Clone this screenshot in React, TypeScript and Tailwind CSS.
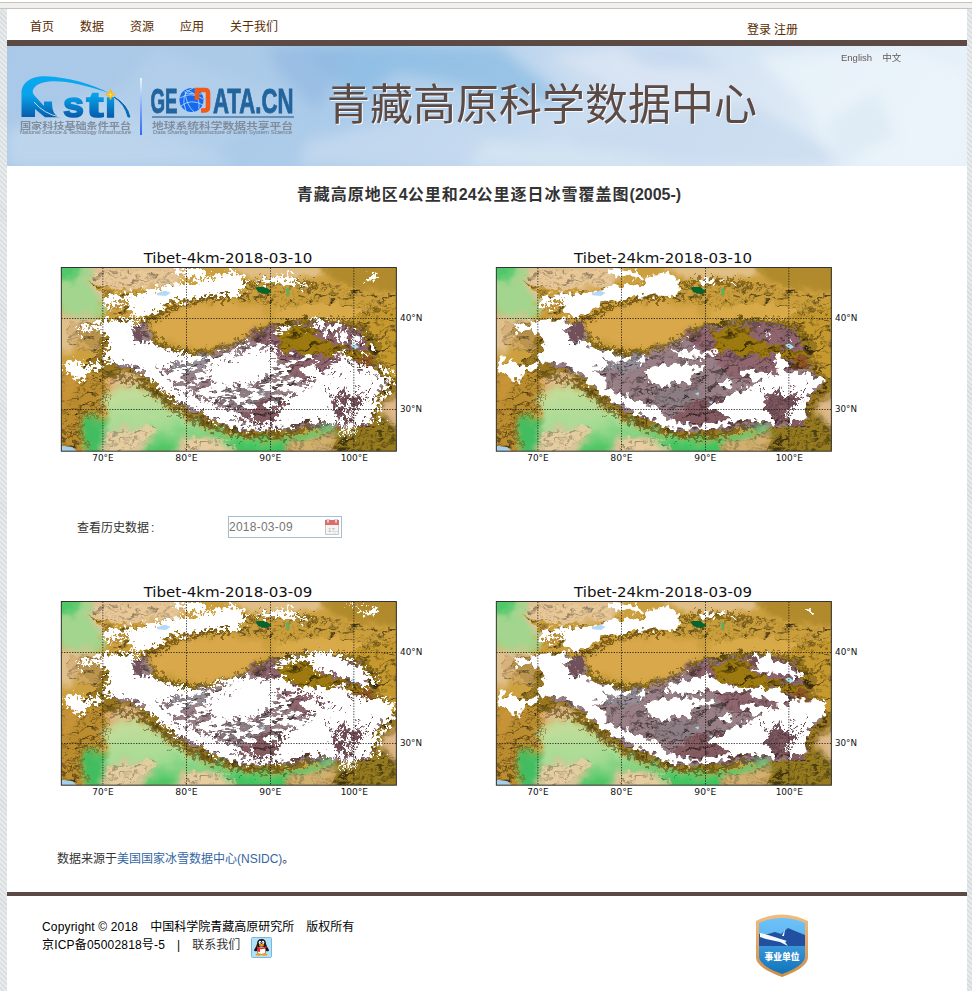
import React from "react";

const CJK = "font-['Liberation_Sans','Noto_Sans_CJK_SC',sans-serif]";

function SharedDefs() {
  return (
    <svg width="0" height="0" className="absolute" aria-hidden="true">
      <defs>
        <filter id="relief" x="0" y="0" width="1" height="1" colorInterpolationFilters="sRGB">
          <feTurbulence type="fractalNoise" baseFrequency="0.032 0.048" numOctaves="3" seed="7" result="n" />
          <feDiffuseLighting in="n" surfaceScale="9" diffuseConstant="1.28" lightingColor="#fff" result="l">
            <feDistantLight azimuth="235" elevation="52" />
          </feDiffuseLighting>
          <feComposite in="SourceGraphic" in2="l" operator="arithmetic" k1="0.95" k2="0.12" k3="0" k4="0" result="m" />
          <feDisplacementMap in="m" in2="n" scale="46" xChannelSelector="R" yChannelSelector="G" />
        </filter>
        <filter id="lowland" x="-0.1" y="-0.1" width="1.2" height="1.2" colorInterpolationFilters="sRGB">
          <feGaussianBlur stdDeviation="9" result="b" />
          <feTurbulence type="fractalNoise" baseFrequency="0.02" numOctaves="3" seed="3" result="n" />
          <feDisplacementMap in="b" in2="n" scale="50" xChannelSelector="R" yChannelSelector="G" />
        </filter>
        <filter id="edge24" x="0" y="0" width="1170" height="690" filterUnits="userSpaceOnUse" colorInterpolationFilters="sRGB">
          <feTurbulence type="fractalNoise" baseFrequency="0.05" numOctaves="2" seed="11" result="n" />
          <feDisplacementMap in="SourceGraphic" in2="n" scale="46" xChannelSelector="R" yChannelSelector="G" />
        </filter>
        <filter id="edge4" x="0" y="0" width="1170" height="690" filterUnits="userSpaceOnUse" colorInterpolationFilters="sRGB">
          <feTurbulence type="fractalNoise" baseFrequency="0.08" numOctaves="3" seed="5" result="n" />
          <feDisplacementMap in="SourceGraphic" in2="n" scale="60" xChannelSelector="R" yChannelSelector="G" />
        </filter>
        <filter id="streaks" x="0" y="0" width="1170" height="690" filterUnits="userSpaceOnUse" colorInterpolationFilters="sRGB">
          <feTurbulence type="fractalNoise" baseFrequency="0.025 0.055" numOctaves="5" seed="21" result="n" />
          <feColorMatrix in="n" type="matrix" values="0 0 0 0 1  0 0 0 0 1  0 0 0 0 1  22 0 0 0 -11" result="t" />
          <feDisplacementMap in="SourceGraphic" in2="n" scale="90" xChannelSelector="G" yChannelSelector="B" result="s" />
          <feComposite in="t" in2="s" operator="in" />
        </filter>
        <filter id="dense" x="0" y="0" width="1170" height="690" filterUnits="userSpaceOnUse" colorInterpolationFilters="sRGB">
          <feTurbulence type="fractalNoise" baseFrequency="0.055 0.045" numOctaves="4" seed="9" result="n" />
          <feColorMatrix in="n" type="matrix" values="0 0 0 0 1  0 0 0 0 1  0 0 0 0 1  22 0 0 0 -10" result="t" />
          <feDisplacementMap in="SourceGraphic" in2="n" scale="90" xChannelSelector="G" yChannelSelector="B" result="s" />
          <feComposite in="t" in2="s" operator="in" />
        </filter>
        <clipPath id="frame">
          <rect x="34" y="83" width="1006" height="551" />
        </clipPath>
        <linearGradient id="ganges" x1="0" y1="0" x2="0.25" y2="1">
          <stop offset="0" stopColor="#c9dc9c" />
          <stop offset="0.55" stopColor="#a9dc96" />
          <stop offset="1" stopColor="#3cc35d" />
        </linearGradient>
        <g id="terrain">
          <rect x="0" y="50" width="1100" height="640" fill="#cda03f" />
          <g filter="url(#lowland)">
            <path d="M0 50H115L160 100V225L110 240L0 200Z" fill="#a3d58e" />
            <path d="M0 50H105L75 125L0 120Z" fill="#4fc869" />
            <path d="M110 60H420L385 140L250 160L165 185L135 160Z" fill="#e2c294" />
            <path d="M0 215L160 235L90 265L70 330L0 355Z" fill="#dfbf8c" />
            <path d="M500 60H830L810 120L700 115L600 120Z" fill="#e0bf87" />
            <path d="M800 60H1100V150L960 155L850 125Z" fill="#b08a2c" />
            <path d="M690 195L850 185L1080 180V245L860 255L680 240Z" fill="#d8aa49" />
          </g>
          <g filter="url(#relief)">
            <path d="M110 125L160 140L250 150L330 150L470 125L600 122L760 130L900 140L1060 170V245L960 215L850 190L700 205L610 200L540 175L440 190L330 235L280 250L160 220L250 200L160 165Z" fill="#bd9436" />
            <path d="M1060 180V420L1000 400L980 300L900 240L970 205Z" fill="#b98f2b" />
            <path d="M20 380L160 370L240 400L180 430L160 500L110 530L90 650H20Z" fill="#b0842b" />
            <path d="M75 265L160 235L300 245L330 310L430 335L560 305L650 255L800 232L930 255L985 310L1000 400L1050 420V650H830L850 590L780 555L690 595L590 592L480 565L390 525L290 445L200 405L100 390L140 340Z" fill="#8f6f1e" />
            <path d="M1060 470L1060 650H840L870 560L980 540L1000 500Z" fill="#8b721d" />
          </g>
          <g filter="url(#relief)">
            <path d="M225 250L290 240L315 315L430 352L540 315L610 275L700 255L850 240L920 265L960 350L990 410L1020 425L965 480L960 540L880 565L700 570L580 575L490 540L400 500L350 450L290 405L180 370L200 290Z" fill="#8f777d" />
            <path d="M590 280L700 260L850 242L930 270L970 350L900 420L740 410L640 330Z" fill="#865f67" />
            <path d="M640 480L830 470L970 470L950 555L800 550L640 565L560 540Z" fill="#7b555a" />
            <path d="M350 340L480 345L470 390L400 400L350 375Z" fill="#8d858d" />
            <path d="M500 450L640 440L620 500L520 495Z" fill="#83747a" />
          </g>
          <g filter="url(#relief)">
            <path d="M675 280L750 252L800 268L810 300L900 325L960 340L970 385L930 385L890 345L760 348L700 325Z" fill="#93720f" />
            <path d="M900 348L975 350L970 385L935 385Z" fill="#865023" />
          </g>
          <g filter="url(#lowland)">
            <path d="M290 255L410 200L540 182L650 215L655 238L600 280L545 312L440 330L340 295Z" fill="#d9a84b" />
            <path d="M168 450L270 435L330 480L400 530L480 565L590 592L700 595L850 555L850 590L700 650H150Z" fill="url(#ganges)" />
            <path d="M95 525L165 540L170 650H125L95 590Z" fill="#41bd60" />
            <path d="M175 415L250 400L290 425L175 445Z" fill="#e0bb8b" />
            <path d="M160 575L270 560L330 575L290 610L250 660H165Z" fill="#d9c698" />
            <path d="M380 595L480 590L560 640L540 660H370Z" fill="#dcc596" />
            <path d="M710 620L850 575L855 650H700Z" fill="#d1b47c" />
            <path d="M990 500L1060 440V575L1010 530Z" fill="#e0ba8b" />
            <path d="M40 390L90 395L60 470L34 520Z" fill="#c9953a" />
          </g>
          <g filter="url(#relief)" opacity=".6">
            <path d="M160 580L310 555L320 570L230 640H180Z" fill="#dec59a" />
            <path d="M400 600L500 590L560 620L530 640H400Z" fill="#dec59a" />
            <path d="M700 610L850 570L860 640H710Z" fill="#c6a15e" />
            <path d="M180 420L240 405L280 430L180 440Z" fill="#dab183" />
            <path d="M60 240L160 240L150 340L50 320Z" fill="#c5a068" />
            <path d="M120 90L400 90L380 130L160 150Z" fill="#dfbf91" />
          </g>
          <path d="M278 252Q340 210 410 188T545 176" fill="none" stroke="#64480c" strokeWidth="13" filter="url(#edge4)" opacity=".7" />
          <path d="M288 262L340 315L435 342L545 318L620 272L700 252L850 240L930 255L980 310" fill="none" stroke="#6b560f" strokeWidth="11" filter="url(#edge4)" opacity=".65" />
          <path d="M160 400L270 425L380 515L480 562L590 588L700 588L800 552" fill="none" stroke="#5d4a10" strokeWidth="16" filter="url(#edge4)" opacity=".6" />
          <path d="M170 440L165 510L120 530L90 515L90 580L110 620" fill="none" stroke="#7c5a16" strokeWidth="9" filter="url(#edge4)" opacity=".55" />
          <path d="M590 135L650 120L780 130L800 150" fill="none" stroke="#6b500d" strokeWidth="16" filter="url(#edge4)" opacity=".65" />
          <path d="M615 142L645 140L665 153L650 163L625 157Z" fill="#08632d" />
          <path d="M708 148L716 142L718 168L710 164Z" fill="#55b36a" />
          <path d="M34 617L68 622L80 634H34Z" fill="#a4cfee" />
          <path d="M900 315L912 310L927 321L915 328Z" fill="#a9e4f4" />
          <path d="M630 460L642 457L640 467ZM670 485L684 484L680 492Z" fill="#9be3ea" />
        </g>
        <g id="snowCore">
          <path d="M165 168L300 158L380 138L475 132L490 108L535 98L580 115L585 138L560 168L480 166L400 185L370 178L330 212L270 236L245 227L240 193L180 210L160 202Z" />
          <path d="M370 86L430 90L480 108L465 118L380 103Z" />
          <path d="M85 262L130 248L165 240L248 238L262 250L242 270L255 305L290 308L330 325L400 340L440 364L390 368L350 352L375 386L320 382L360 412L370 450L400 460L460 485L515 502L540 530L620 560L700 545L755 542L720 565L620 569L540 560L480 532L440 508L380 482L330 447L290 405L250 375L172 370L162 340L178 310L168 280L130 268L92 278Z" />
          <path d="M40 368L65 358L92 362L105 382L155 365L162 378L125 394L108 402L92 432L65 404L40 392Z" />
          <path d="M485 388L540 375L600 370L655 378L660 395L620 402L608 425L570 432L525 442L495 425L480 408Z" />
          <path d="M565 335L640 330L700 340L655 355L580 350Z" />
          <path d="M690 495L750 460L790 442L835 430L782 412L768 395L830 395L880 404L868 348L892 340L912 400L960 398L1025 418L985 442L965 485L925 462L890 470L850 462L835 490L875 555L810 540L750 545L715 530Z" />
          <path d="M930 480L965 480L965 535L910 552L900 520Z" />
        </g>
      </defs>
    </svg>
  );
}

type PlotProps = { km: 4 | 24; day: string };

function SnowMap({ km, day }: PlotProps) {
  const fine = km === 4;
  const late = day === "10";
  const titleX = fine ? 281 : 267;
  return (
    <svg viewBox="0 0 1170 690" className="block h-[230px] w-[390px] shrink-0 font-['DejaVu_Sans',sans-serif]">
      <text x={titleX} y="69" fontSize="41" textLength={fine ? 506 : 534} lengthAdjust="spacingAndGlyphs" fill="#111">
        {`Tibet-${km}km-2018-03-${day}`}
      </text>
      <g clipPath="url(#frame)">
        <use href="#terrain" />
        <g fill="#fff">
          <use href="#snowCore" filter={fine ? "url(#edge4)" : "url(#edge24)"} />
          {!fine && (
            <g filter="url(#edge24)">
              <path d="M640 124L688 118L690 132L645 133ZM705 112L716 120L708 124ZM735 124L750 122L752 136ZM870 345L890 340L895 355Z" />
              <path d="M455 365L475 350L485 352L470 372ZM600 300L615 298L612 306ZM820 248L832 250L825 256ZM845 283L860 285L852 292ZM905 300L917 302L912 310ZM700 430L740 420L760 430L730 445ZM660 500L690 485L700 500L670 515Z" />
            </g>
          )}
          {!fine && !late && (
            <g filter="url(#edge24)">
              <path d="M540 345L620 310L670 300L700 325L760 342L890 348L905 400L860 380L780 355L720 352L650 352L560 360ZM620 370L690 378L680 395L620 390Z" />
              <path d="M790 248L850 242L870 265L905 270L960 308L910 310L865 297L795 290L830 268Z" />
              <path d="M915 380L1020 378L1025 425L940 445L905 420ZM965 112L983 100L984 122ZM690 120L715 102L725 120Z" />
              <path d="M940 440L990 430L955 510L915 540L900 490ZM800 465L870 460L840 500Z" />
            </g>
          )}
          {fine && (
            <>
              <g filter="url(#edge4)">
                <path d="M270 150L370 132L490 120L540 92L595 120L570 155L420 165L300 165ZM370 85L450 84L480 108L390 103Z" />
                <path d="M610 122L700 110L715 92L728 118L785 145L730 132L660 133Z" />
                <path d="M490 372L640 340L670 350L655 400L590 420L505 425L470 405Z" />
                <path d="M700 490L790 430L880 430L820 500L720 545L670 555Z" />
                <path d="M940 120L980 98L982 122Z" />
              </g>
              <g filter="url(#streaks)">
                <path d="M300 325L430 355L540 325L600 305L670 315L700 340L760 355L890 355L980 410L820 430L690 500L520 505L360 430Z" />
                <path d="M620 285L680 265L760 255L700 272L640 292Z" />
              </g>
              <g filter="url(#dense)">
                <path d="M470 370L640 325L680 370L660 410L510 432ZM690 500L800 420L890 350L1035 410L970 550L880 560L810 540L650 560ZM360 430L530 500L670 560L480 530Z" />
                <path d="M790 238L850 245L970 310L960 330L850 295L790 280Z" />
              </g>
              <g fill="none" stroke="#fff" strokeWidth="5" filter="url(#edge4)">
                <path d="M878 540V600M890 545V595M902 540V590M914 545V578M310 330L420 350" />
              </g>
            </>
          )}
          {fine && !late && (
            <g filter="url(#edge4)">
              <path d="M440 345L560 310L660 322L690 310L740 340L890 340L910 400L820 385L760 355L660 352L640 395L500 400L470 380L560 350L520 335Z" />
              <path d="M680 258L790 240L850 240L920 275L985 318L940 330L860 300L800 292L785 262Z" />
              <path d="M880 85L950 110L985 100L985 122L950 120ZM915 370L1035 385L1020 440L930 440Z" />
              <path d="M690 490L760 450L900 420L880 480L780 500L690 525Z" />
            </g>
          )}
        </g>
        <g filter="url(#edge4)" fill="#72505a">
          <path d="M250 268L275 255L282 295L258 302Z" />
          {!fine && <path d="M262 240L295 252L297 303L252 300Z" />}
          <path d="M865 455L900 465L895 480L860 475ZM850 482L880 495L875 540L858 515ZM915 465L930 480L912 520L905 490ZM845 395L860 405L850 410Z" />
        </g>
        <g filter="url(#edge4)" fill="none" stroke="#65434a" strokeWidth="4">
          <path d="M820 430L850 475L875 535M875 440L905 540M930 430L915 540M960 430L940 500M740 420L790 430" />
        </g>
        <path d="M320 160L345 152L362 158L348 168L322 166Z" fill="#b4d9f8" />
        <path d="M172 200L205 184L238 178L230 190L165 214Z" fill="#ba8e39" filter="url(#edge4)" />
      </g>
      <g stroke="#151515" strokeWidth="3" strokeDasharray="4 4" opacity=".78">
        <path d="M158.500 83V634M409.500 83V634M661.500 83V634M911.500 83V634M34 235.500H1040M34 508.500H1040" />
      </g>
      <rect x="34" y="82.500" width="1005" height="551" fill="none" stroke="#333" strokeWidth="3" />
      <g fontSize="25" fill="#111">
        <text x="127" y="662" textLength="64" lengthAdjust="spacingAndGlyphs">70°E</text>
        <text x="376" y="662" textLength="67" lengthAdjust="spacingAndGlyphs">80°E</text>
        <text x="628" y="662" textLength="66" lengthAdjust="spacingAndGlyphs">90°E</text>
        <text x="872" y="662" textLength="82" lengthAdjust="spacingAndGlyphs">100°E</text>
        <text x="1050" y="243" textLength="67" lengthAdjust="spacingAndGlyphs">40°N</text>
        <text x="1050" y="515" textLength="66" lengthAdjust="spacingAndGlyphs">30°N</text>
      </g>
    </svg>
  );
}

function BannerArt() {
  return (
    <svg viewBox="0 0 960 120" preserveAspectRatio="none" className="absolute inset-0 h-full w-full" aria-hidden="true">
      <defs>
        <linearGradient id="sky" x1="0" x2="1" y1="0" y2="0.08">
          <stop offset="0" stopColor="#aac8e7" />
          <stop offset=".4" stopColor="#acccea" />
          <stop offset=".65" stopColor="#cedff1" />
          <stop offset="1" stopColor="#e7f1f9" />
        </linearGradient>
        <filter id="haze"><feGaussianBlur stdDeviation="7" /></filter>
      </defs>
      <rect width="960" height="120" fill="url(#sky)" />
      <g filter="url(#haze)">
        <path d="M290 0H490L570 60L500 50L390 25L350 55Z" fill="#84b8e2" opacity=".65" />
        <path d="M260 0H350L310 65L270 25Z" fill="#93b9e1" opacity=".7" />
        <path d="M0 85L90 50L230 120H0Z" fill="#bdd5ec" />
        <path d="M150 0L280 55L190 120L80 80Z" fill="#b8d1eb" opacity=".5" />
        <path d="M300 95L430 65L580 120H290Z" fill="#c5d9ef" opacity=".8" />
        <path d="M540 10L640 0L790 65L650 60Z" fill="#dbe6f4" opacity=".8" />
        <path d="M560 85L740 55L850 120H580Z" fill="#c6d9ee" opacity=".7" />
        <path d="M750 10L900 0L960 30V120H830L800 60Z" fill="#edf5fb" opacity=".7" />
        <path d="M820 75L870 45L890 90L830 120Z" fill="#d9e8f4" opacity=".6" />
        <path d="M480 95L610 105L680 120H460Z" fill="#d3e4f2" />
        <path d="M610 0H680L715 22L640 20Z" fill="#c6d9ef" />
      </g>
    </svg>
  );
}

function Logos() {
  return (
    <svg viewBox="0 0 290 70" className="block h-[70px] w-[290px] font-['Liberation_Sans','Noto_Sans_CJK_SC',sans-serif]">
      <defs>
        <linearGradient id="nsti" gradientUnits="userSpaceOnUse" x1="0" y1="5" x2="0" y2="48">
          <stop offset="0" stopColor="#08aaf1" />
          <stop offset=".45" stopColor="#08a2eb" />
          <stop offset="1" stopColor="#0756a5" />
        </linearGradient>
        <linearGradient id="bar" x1="0" x2="0" y1="0" y2="1">
          <stop stopColor="#edf6ff" />
          <stop offset=".6" stopColor="#6d9ef6" />
          <stop offset="1" stopColor="#3169f3" />
        </linearGradient>
      </defs>
      <path d="M6.500 46V23C6 11 17 5 30 5.300C53 6 77 13 94 22C71 14 48 9 34 10.500C20 12 15 19 19 24L29 35V30.500H37C37 40 39 45 46 46.300H30L20 38V46Z" fill="url(#nsti)" />
      <path d="M19 31Q29 43 45 46" fill="none" stroke="#d5e6f5" strokeWidth=".9" />
      <g fill="url(#nsti)" stroke="url(#nsti)" strokeWidth="1.600" fontWeight="900" fontSize="35">
        <text x="48" y="45.800" textLength="21" lengthAdjust="spacingAndGlyphs">s</text>
        <text x="71.500" y="45.800" textLength="17" lengthAdjust="spacingAndGlyphs">t</text>
        <text x="90" y="45.800" textLength="11" lengthAdjust="spacingAndGlyphs">ı</text>
      </g>
      <path d="M99 26Q110 33 113 46L115 46Q112 33 99 26Z" fill="#0869b5" stroke="#0869b5" />
      <path d="M95.500 18L97 22L100.500 23.500L97 25L95.500 29L94 25L90.500 23.500L94 22Z" fill="#ffb50b" stroke="#ffb50b" strokeWidth=".6" />
      <path d="M95.500 21L96.200 23L99 23.500L96.200 24.300L95.500 27L94.800 24.300L92 23.500L94.800 23Z" fill="#ffe84f" />
      <g fill="#818d9d" fontWeight="700">
        <text x="5" y="57.500" fontSize="9.500" textLength="111" lengthAdjust="spacingAndGlyphs">国家科技基础条件平台</text>
        <text x="5" y="63" fontSize="5" fontWeight="400" stroke="#818d9d" strokeWidth=".15" textLength="111" lengthAdjust="spacingAndGlyphs">National Science &amp; Technology Infrastructure</text>
        <text x="137" y="57.500" fontSize="9.500" textLength="141" lengthAdjust="spacingAndGlyphs">地球系统科学数据共享平台</text>
        <text x="138" y="62.500" fontSize="5" fontWeight="400" stroke="#818d9d" strokeWidth=".15" textLength="139" lengthAdjust="spacingAndGlyphs">Data Sharing Infrastructure of Earth System Science</text>
      </g>
      <rect x="125" y="7" width="2" height="57" fill="url(#bar)" />
      <g fill="#22649d" stroke="#22649d" strokeWidth=".9" fontWeight="700" fontSize="35">
        <text transform="translate(135.500 42) scale(.534 1)">GE</text>
        <text transform="translate(198 42) scale(.633 1)" textLength="127">ATA.CN</text>
      </g>
      <circle cx="176.500" cy="29" r="12" fill="#1569ef" />
      <g fill="none" stroke="#bdddff" strokeWidth=".8">
        <path d="M165 27Q176 20 188 28M166 35Q176 27 188 34M171 19Q186 23 184 38M170 20Q171 34 179 41M178 17Q164 22 171 40M170 22Q180 23 187 23" />
      </g>
      <path d="M182 29V19H190Q193 19 193 22V36Q193 39.500 189 39.500H186" fill="none" stroke="#f05a1a" strokeWidth="4.600" />
      <path d="M137 46H279" stroke="#4d7ba6" strokeWidth="1.300" />
    </svg>
  );
}

function CalendarIcon() {
  return (
    <svg viewBox="0 0 16 16" className="h-4 w-4">
      <path d="M1.500 2.500H14.500V15.500H1.500Z" fill="#f4f4f4" stroke="#c7c7c7" />
      <path d="M1 1H15V6H1Z" fill="#e16b69" />
      <path d="M3 0V4H5V0M11 0V4H13V0" fill="#fff" stroke="#b28282" strokeWidth=".8" />
      <text x="4" y="12.500" fontSize="6" fill="#aaa" fontFamily="Liberation Sans">17</text>
      <path d="M11 15V12.500H14" fill="#fff" stroke="#ccc" strokeWidth=".7" />
    </svg>
  );
}

function QQIcon() {
  return (
    <svg viewBox="0 0 21 21" className="h-[21px] w-[21px]">
      <rect x=".5" y=".5" width="20" height="20" rx="1" fill="#b5e1f8" stroke="#73b9df" />
      <path d="M6 7Q6 2 10.500 2T15 7Q16 10 18 13Q18 15 15 14Q14 18 10.500 18T6 14Q3 15 3 13Q5 10 6 7Z" fill="#171717" />
      <ellipse cx="10.500" cy="13.500" rx="4" ry="4" fill="#fff" />
      <ellipse cx="9" cy="5.500" rx="1.300" ry="1.800" fill="#fff" />
      <ellipse cx="12" cy="5.500" rx="1.300" ry="1.800" fill="#fff" />
      <circle cx="9.300" cy="5.800" r=".6" /><circle cx="11.800" cy="5.800" r=".6" />
      <ellipse cx="10.500" cy="8" rx="2.800" ry="1" fill="#f5a514" />
      <path d="M5.500 9Q10.500 12 15.500 9L15.500 11Q12 12.500 9 12V15L6.500 14.500V11.500Z" fill="#e62926" />
      <ellipse cx="7.500" cy="17.500" rx="3" ry="1.200" fill="#ef9f20" />
      <ellipse cx="13.500" cy="17.500" rx="3" ry="1.200" fill="#ef9f20" />
    </svg>
  );
}

function Badge() {
  return (
    <svg viewBox="0 0 52 63" className="h-[63px] w-[52px]">
      <defs>
        <linearGradient id="gold" x1="0" x2="0" y1="0" y2="1"><stop stopColor="#f0bd80" /><stop offset="1" stopColor="#ce8d47" /></linearGradient>
        <linearGradient id="shield" x1="0" x2="0" y1="0" y2="1"><stop stopColor="#6fc2f8" /><stop offset=".45" stopColor="#59b3ef" /><stop offset=".5" stopColor="#3996d9" /><stop offset="1" stopColor="#0f73bb" /></linearGradient>
      </defs>
      <path d="M0 7Q26 -6 52 7V44Q51 54 26 63Q1 54 0 44Z" fill="url(#gold)" />
      <path d="M3 9Q26 -1 49 9V43Q48 52 26 60Q4 52 3 43Z" fill="url(#shield)" />
      <path d="M3 20L12 20L19 18L25 20L32 14L39 17L49 21V32H3Z" fill="#20509f" />
      <path d="M4 19L9 20L31 27L29 28L32 32L24 28L10 25L4 23ZM26 22L29 15L28 22Z" fill="#f4faff" />
      <text x="8.500" y="46" fontSize="9" fontWeight="900" fill="#fff" textLength="35" lengthAdjust="spacingAndGlyphs" fontFamily="Noto Sans CJK SC">事业单位</text>
    </svg>
  );
}

export default function App() {
  return (
    <div className={`flex h-[991px] w-[972px] flex-col overflow-hidden bg-white text-[12px] text-[#333] ${CJK}`}>
      <SharedDefs />
      <div className="mt-[2px] h-[7px] shrink-0 border-y border-[#c6c3bf] bg-[#f1f0ef]" />
      <div className="flex min-h-0 flex-1 bg-[repeating-linear-gradient(45deg,#e7ebec_0px,#e7ebec_2px,#d8dddf_2px,#d8dddf_3.5px)]">
        <div className="mr-[5px] ml-[7px] flex w-[960px] shrink-0 flex-col bg-white">
          <nav className="flex h-[31px] shrink-0 text-[#592b00]">
            <div className="flex gap-[26px] pt-[9px] pl-[23px] leading-[18px]">
              <a>首页</a><a>数据</a><a>资源</a><a>应用</a><a>关于我们</a>
            </div>
            <div className="ml-[469px] flex gap-[3px] pt-3 leading-[18px]"><a>登录</a><a>注册</a></div>
          </nav>
          <header className="relative h-[126px] shrink-0 border-t-[6px] border-[#5c4a44]">
            <BannerArt />
            <div className="relative flex h-[120px]">
              <div className="w-[320px] pt-[25px] pl-[8px]"><Logos /></div>
              <h1 className="w-[514px] pt-[23px] text-[43px] leading-[64px] font-normal whitespace-nowrap text-[#5c4a44] font-['Noto_Sans_CJK_SC',sans-serif] [text-shadow:1px_1px_0_#f6faff]">青藏高原科学数据中心</h1>
              <div className="flex h-5 gap-[10px] pt-[4px] text-[9.500px] leading-4 text-[#665a5b]"><a>English</a><a>中文</a></div>
            </div>
          </header>
          <main className="flex h-[730px] shrink-0 flex-col border-b-4 border-[#5c4a44]">
            <h2 className="pt-[17px] pl-[4px] text-center text-[16px] leading-6 font-bold">
              <span className="tracking-[1px]">青藏高原地区</span>4<span className="tracking-[1px]">公里和</span>24<span className="tracking-[1px]">公里逐日冰雪覆盖图</span>(2005-)
            </h2>
            <div className="mt-[33px] ml-[43px] flex gap-[45px]"><SnowMap km={4} day="10" /><SnowMap km={24} day="10" /></div>
            <div className="mt-[46px] ml-[70px] flex h-[22px] items-center">
              <span className="w-[151px] pt-px">查看历史数据<span className="pl-[2px]">:</span></span>
              <div className="flex h-[22px] w-[114px] items-center justify-between border border-[#a4bed4] pr-px text-[12px] tracking-[0.25px] text-[#777]"><span>2018-03-09</span><CalendarIcon /></div>
            </div>
            <div className="mt-[36px] ml-[43px] flex gap-[45px]"><SnowMap km={4} day="09" /><SnowMap km={24} day="09" /></div>
            <p className="mt-[46px] ml-[50px] leading-[18px]">数据来源于<a className="text-[#3466a2]">美国国家冰雪数据中心(NSIDC)</a>。</p>
          </main>
          <footer className="flex justify-between pt-[18px] pr-[159px] pl-[35px] text-black">
            <div className="pt-[4px] leading-[18px]">
              <div className="flex gap-3"><span className="tracking-[0.16px]">Copyright © 2018</span><span>中国科学院青藏高原研究所</span><span>版权所有</span></div>
              <div className="flex gap-3"><span className="tracking-[0.19px]">京ICP备05002818号-5</span><span>|</span><a className="text-[#333]">联系我们</a><span className="-ml-[1px] pt-[1px]"><QQIcon /></span></div>
            </div>
            <Badge />
          </footer>
        </div>
      </div>
    </div>
  );
}
